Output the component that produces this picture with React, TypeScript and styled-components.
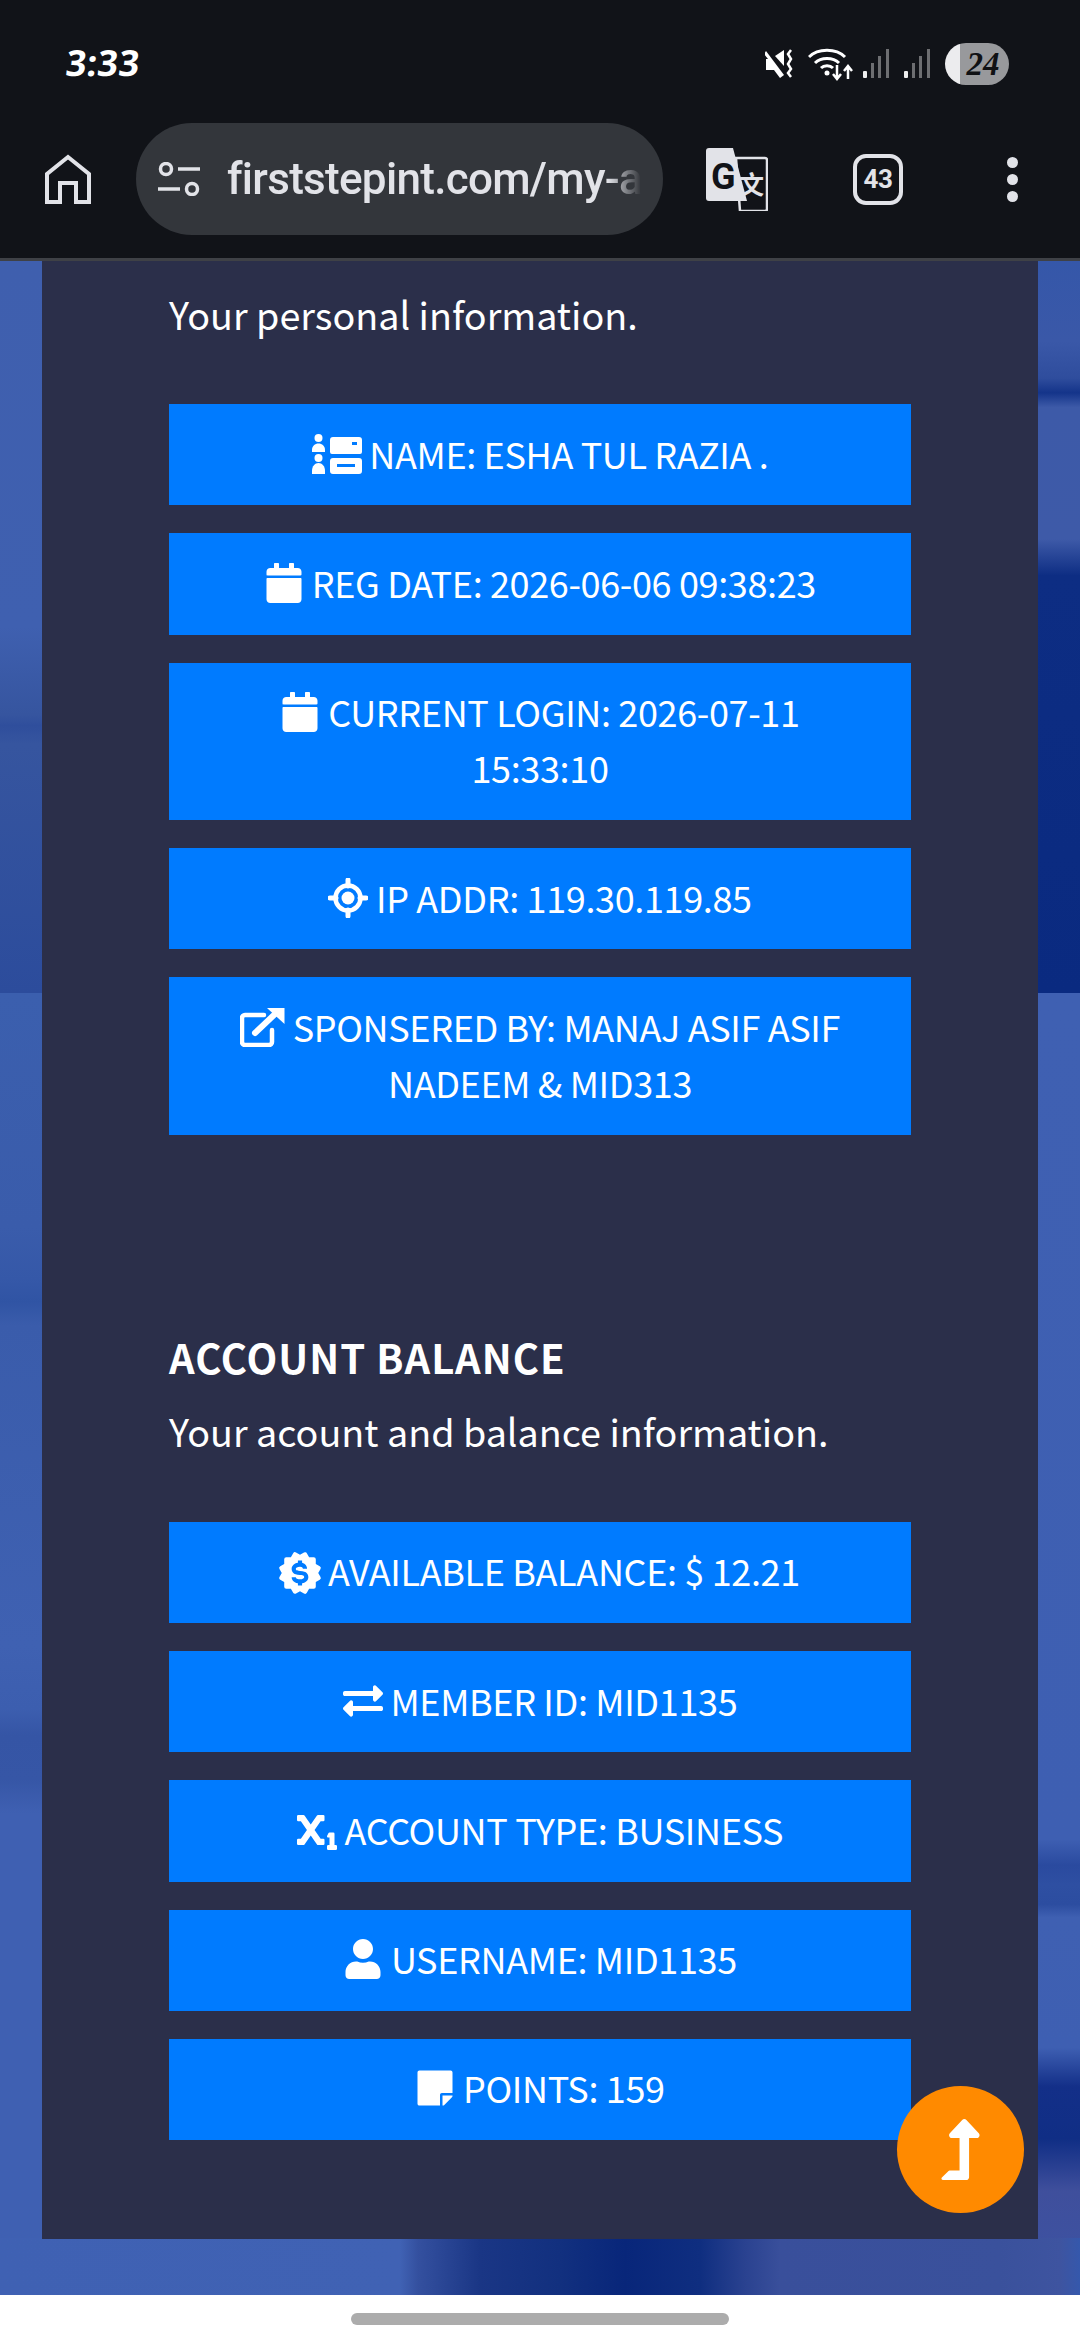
import React from "react";
import styled, { createGlobalStyle } from "styled-components";
import { FaCalendar, FaExchangeAlt, FaSubscript, FaStickyNote, FaLevelUpAlt, FaUser } from "react-icons/fa";
import { BiSolidBadgeDollar } from "react-icons/bi";

const Global = createGlobalStyle`
  html, body { margin: 0; padding: 0; background: #fff; }
`;

const Page = styled.div`
  position: relative;
  width: 1080px;
  height: 2340px;
  overflow: hidden;
  display: flex;
  flex-direction: column;
  font-family: "Noto Sans CJK SC", "Noto Sans", sans-serif;
`;

const Header = styled.header`
  background: #111318;
  border-bottom: 3px solid #3f4146;
  flex: none;
`;

const StatusBar = styled.div`
  height: 123px;
  box-sizing: border-box;
  padding: 43px 71px 0 66px;
  display: flex;
  align-items: flex-start;
  justify-content: space-between;
`;

const Time = styled.span`
  font: 700 36px/40px "Noto Sans", sans-serif;
  color: #fff;
  display: inline-block;
  letter-spacing: 0.5px;
  transform: skewX(-6deg);
  transform-origin: left center;
`;

const StatusIcons = styled.div`
  display: flex;
  align-items: flex-start;
`;

const StatusIcon = styled.svg<{ $left: number; $top: number }>`
  display: block;
  margin-left: ${(p) => p.$left}px;
  margin-top: ${(p) => p.$top}px;
`;

const Battery = styled.div`
  margin-left: 14px;
  width: 64px;
  height: 42px;
  border-radius: 21px;
  background: linear-gradient(90deg, #ececee 0 15px, #98999c 15px);
  color: #101114;
  font: italic 700 33px/42px "Liberation Serif", serif;
  text-align: center;
  padding-left: 12px;
  box-sizing: border-box;
`;

const Toolbar = styled.div`
  height: 112px;
  margin-bottom: 23px;
  display: flex;
  align-items: center;
  padding-left: 45px;
`;

const ToolIcon = styled.svg<{ $left: number }>`
  display: block;
  flex: none;
  margin-left: ${(p) => p.$left}px;
`;

const UrlPill = styled.div`
  flex: none;
  margin-left: 45px;
  width: 527px;
  height: 112px;
  box-sizing: border-box;
  border-radius: 56px;
  background: #33363b;
  padding-left: 22px;
  display: flex;
  align-items: center;
`;

const TuneIcon = styled.svg`
  display: block;
  flex: none;
`;

const UrlText = styled.div`
  margin-left: 27px;
  width: 414px;
  overflow: hidden;
  white-space: nowrap;
  font: 500 44px/56px Roboto, sans-serif;
  letter-spacing: -0.7px;
  color: #e2e3e8;
  -webkit-mask-image: linear-gradient(90deg, #000 92%, transparent 100%);
  mask-image: linear-gradient(90deg, #000 92%, transparent 100%);
`;

const TabCount = styled.div`
  margin-left: 85px;
  flex: none;
  width: 50px;
  height: 51px;
  box-sizing: border-box;
  border: 4px solid #e2e3e8;
  border-radius: 13px;
  color: #e2e3e8;
  font: 700 26px/43px Roboto, sans-serif;
  letter-spacing: -0.5px;
  text-align: center;
`;

const Main = styled.main`
  flex: 1;
  padding: 0 42px;
  background-color: #3f60b2;
  background-repeat: no-repeat;
  background-image:
    linear-gradient(90deg, #3f61b3 0, #4062b4 400px, #34509f 418px, #1a3685 480px, #12307f 560px, #08267a 625px, #0f2e80 700px, #2a4290 745px, #394f9b 780px, #3a519c 1000px, #3e54a0 1060px, #3558ac 1080px),
    linear-gradient(180deg, #3f60b2 0, #3e5fb2 65%, #2a4a9f 67%, #2e4fa2 68.5%, #2c4da0 70%, #3f60b2 71%, #3e5fb2 81%, #132f88 84%, #102e85 88%, #3f4f9c 92%, #3c53a4 100%),
    linear-gradient(180deg, #3b5fae 0, #3a5cab 18%, #3558a8 22%, #3054a4 23.7%, #3a5cab 25.5%, #3f61b2 50%, #3c5eaf 55%, #3555a5 57%, #3656a6 60.4%, #3f60b2 63%, #3f60b2 100%),
    linear-gradient(180deg, #3557a9 0, #3a58a8 11%, #2f4d9d 16%, #14348a 18%, #3d5aa8 20%, #3e5aa8 38%, #0d2d83 43%, #0a2a80 100%),
    linear-gradient(180deg, #3f5fae 0, #3f60b0 50%, #36559f 62%, #2f4e9c 63.5%, #36559f 66%, #2c4c9c 100%);
  background-size: 1080px 57px, 42px 1302px, 42px 1302px, 42px 732px, 42px 732px;
  background-position: 0 100%, 100% 732px, 0 732px, 100% 0, 0 0;
`;

const Panel = styled.section`
  background: #2b2f4a;
  height: 1978px;
  box-sizing: border-box;
  padding: 25px 127px 0;
  color: #fff;
`;

const Title = styled.h2`
  margin: 194px 0 18px;
  font-size: 40px;
  letter-spacing: 1px;
  font-weight: 700;
  line-height: 56px;
`;

const Intro = styled.p<{ $after: number }>`
  margin: 0 0 ${(p) => p.$after}px;
  font-size: 37.7px;
  font-weight: 400;
  line-height: 56px;
`;

const List = styled.div`
  display: flex;
  flex-direction: column;
  gap: 28px;
`;

const Row = styled.div`
  background: #007bff;
  color: #fff;
  padding: 20.67px 40px 24.67px;
  font-size: 36px;
  letter-spacing: -0.36px;
  line-height: 56px;
  text-align: center;
  svg { vertical-align: -5px; }
`;

const BadgeIcon = styled(BiSolidBadgeDollar)`
  margin: -7px -5px;
`;

const Fab = styled.div`
  position: absolute;
  left: 897px;
  top: 2086px;
  width: 127px;
  height: 127px;
  border-radius: 50%;
  background: #ff8a00;
  color: #fff;
  display: flex;
  align-items: center;
  justify-content: center;
`;

const NavBar = styled.div`
  flex: none;
  height: 45px;
  background: #fff;
  display: flex;
  justify-content: center;
  padding-top: 18px;
  box-sizing: border-box;
`;

const Handle = styled.div`
  width: 378px;
  height: 12px;
  border-radius: 6px;
  background: #acacac;
`;

const NameIcon = () => (
  <svg width="50" height="40" viewBox="0 0 50 40" fill="#fff">
    <circle cx="6.5" cy="4" r="4" />
    <path d="M0 16c0-4 3-6.5 6.500-6.500S13 12 13 16v2H0z" />
    <circle cx="6.500" cy="24" r="4" />
    <path d="M0 37c0-5 3-8 6.500-8S13 32 13 37v3H0z" />
    <path fillRule="evenodd" d="M18 6a3 3 0 0 1 3-3h26a3 3 0 0 1 3 3v12a2 2 0 0 1-2 2H20a2 2 0 0 1-2-2zM40 8v3h5V8z" />
    <path fillRule="evenodd" d="M18 27a3 3 0 0 1 3-3h26a3 3 0 0 1 3 3v10a3 3 0 0 1-3 3H21a3 3 0 0 1-3-3zM25 30v3h18v-3z" />
  </svg>
);

const TargetIcon = () => (
  <svg width="40" height="40" viewBox="0 0 40 40" fill="none" stroke="#fff">
    <circle cx="20" cy="20" r="12.500" strokeWidth="4.500" />
    <circle cx="20" cy="20" r="6.500" fill="#fff" stroke="none" />
    <path d="M20 2v6M20 32v6M2 20h6M32 20h6" strokeWidth="5" strokeLinecap="round" />
  </svg>
);

const LinkIcon = () => (
  <svg width="45" height="40" viewBox="0 0 45 40" fill="none" stroke="#fff">
    <path d="M24 8H5a3 3 0 0 0-3 3v24a3 3 0 0 0 3 3h24a3 3 0 0 0 3-3V23" strokeWidth="4.500" strokeLinecap="round" />
    <path d="M15 26 35 7" strokeWidth="6" strokeLinecap="round" />
    <path d="M27 1h17.500v16z" fill="#fff" stroke="none" />
  </svg>
);

type Item = { icon: React.ReactNode; text: string };

const personal: Item[] = [
  { icon: <NameIcon />, text: "NAME: ESHA TUL RAZIA ." },
  { icon: <FaCalendar size={40} />, text: "REG DATE: 2026-06-06 09:38:23" },
  { icon: <FaCalendar size={40} />, text: "CURRENT LOGIN: 2026-07-11 15:33:10" },
  { icon: <TargetIcon />, text: "IP ADDR: 119.30.119.85" },
  { icon: <LinkIcon />, text: "SPONSERED BY: MANAJ ASIF ASIF NADEEM & MID313" },
];

const balance: Item[] = [
  { icon: <BadgeIcon size={50} />, text: "AVAILABLE BALANCE: $ 12.21" },
  { icon: <FaExchangeAlt size={40} />, text: "MEMBER ID: MID1135" },
  { icon: <FaSubscript size={40} />, text: "ACCOUNT TYPE: BUSINESS" },
  { icon: <FaUser size={40} />, text: "USERNAME: MID1135" },
  { icon: <FaStickyNote size={40} />, text: "POINTS: 159" },
];

const Rows = ({ items }: { items: Item[] }) => (
  <List>
    {items.map((item) => (
      <Row key={item.text}>
        {item.icon} {item.text}
      </Row>
    ))}
  </List>
);

export default function App() {
  return (
    <Page>
      <Global />
      <Header>
        <StatusBar>
          <Time>3:33</Time>
          <StatusIcons>
            <StatusIcon $left={0} $top={6} width="30" height="30" viewBox="0 0 30 30" fill="#fff">
              <path d="M1 2 19 26 15 29 9 21H1V10h2L-1 5z" />
              <path d="M10 7 19 1v16z" />
              <path d="M26 1l-3 4 3 5-3 5 3 5-3 4 3 4" fill="none" stroke="#fff" strokeWidth="2.500" />
            </StatusIcon>
            <StatusIcon $left={13} $top={4} width="46" height="34" viewBox="0 0 46 34" fill="none" stroke="#fff">
              <path d="M1 10C10 1 28 1 37 10M7 16c6-6 18-6 24 0M13 21c3-3 9-3 12 0" strokeWidth="3" />
              <circle cx="19" cy="26" r="2.500" fill="#fff" stroke="none" />
              <path d="M29 18v13M25 27l4 5 4-5M40 32V20M36 24l4-5 4 5" strokeWidth="2.500" />
            </StatusIcon>
            <StatusIcon $left={9} $top={6} width="27" height="30" viewBox="0 0 27 30" fill="#6d6e71">
              <rect x="0" y="22" width="4" height="7" rx="1" fill="#eeeeee" />
              <rect x="8" y="14" width="3" height="15" />
              <rect x="15" y="7" width="3" height="22" />
              <rect x="23" y="0" width="3" height="29" />
            </StatusIcon>
            <StatusIcon $left={14} $top={6} width="27" height="30" viewBox="0 0 27 30" fill="#6d6e71">
              <rect x="0" y="22" width="4" height="7" rx="1" fill="#eeeeee" />
              <rect x="8" y="14" width="3" height="15" />
              <rect x="15" y="7" width="3" height="22" />
              <rect x="23" y="0" width="3" height="29" />
            </StatusIcon>
            <Battery>24</Battery>
          </StatusIcons>
        </StatusBar>
        <Toolbar>
          <ToolIcon $left={0} width="46" height="50" viewBox="0 0 46 50" fill="none" stroke="#e2e3e8" strokeWidth="4">
            <path d="M2 48V20L23 3l21 17v28H31V29H15v19z" />
          </ToolIcon>
          <UrlPill>
            <TuneIcon width="42" height="34" viewBox="0 0 42 34" fill="none" stroke="#e2e3e8" strokeWidth="3.500">
              <circle cx="8" cy="7" r="5.500" />
              <path d="M20 7h22M0 27h22" />
              <circle cx="34" cy="27" r="5.500" />
            </TuneIcon>
            <UrlText>firststepint.com/my-a</UrlText>
          </UrlPill>
          <ToolIcon $left={43} width="62" height="63" viewBox="0 0 62 63">
            <path d="M30 10h29a2 2 0 0 1 2 2v49a2 2 0 0 1-2 2H34z" fill="#111318" stroke="#e2e3e8" strokeWidth="2.500" />
            <path d="M3 0h24l14 53H3a3 3 0 0 1-3-3V3a3 3 0 0 1 3-3z" fill="#e2e3e8" />
            <text x="5" y="41" fontFamily="Roboto, sans-serif" fontWeight="700" fontSize="36" fill="#111318">G</text>
            <text x="33" y="46" fontFamily="'Noto Sans CJK SC', sans-serif" fontWeight="700" fontSize="25" fill="#e2e3e8">文</text>
          </ToolIcon>
          <TabCount>43</TabCount>
          <ToolIcon $left={104} width="11" height="45" viewBox="0 0 11 45" fill="#e2e3e8">
            <circle cx="5.500" cy="5.500" r="5.500" />
            <circle cx="5.500" cy="22.500" r="5.500" />
            <circle cx="5.500" cy="39.500" r="5.500" />
          </ToolIcon>
        </Toolbar>
      </Header>
      <Main>
        <Panel>
          <Intro $after={62}>Your personal information.</Intro>
          <Rows items={personal} />
          <Title>ACCOUNT BALANCE</Title>
          <Intro $after={63}>Your acount and balance information.</Intro>
          <Rows items={balance} />
        </Panel>
      </Main>
      <NavBar>
        <Handle />
      </NavBar>
      <Fab>
        <FaLevelUpAlt size={61} />
      </Fab>
    </Page>
  );
}
